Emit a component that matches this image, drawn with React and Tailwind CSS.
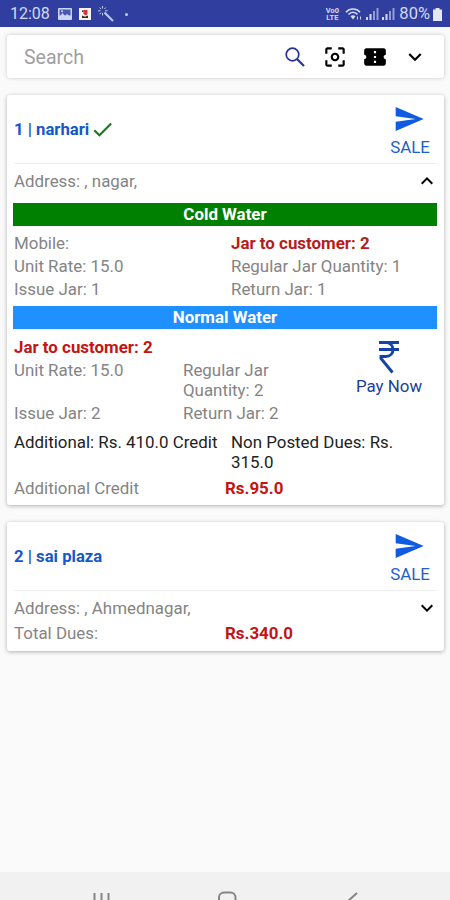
import React from "react";
import {
  MdCenterFocusWeak,
  MdCheck,
  MdConfirmationNumber,
  MdKeyboardArrowDown,
  MdKeyboardArrowUp,
  MdSend,
} from "react-icons/md";

const SignalBars = () => (
  <svg className="w-[13px] h-[14px]" viewBox="0 0 13 14" fill="currentColor">
    <rect x="0" y="10" width="2" height="3" />
    <rect x="3.5" y="7" width="2" height="6" />
    <rect x="7" y="4" width="2" height="9" opacity="0.6" />
    <rect x="10.5" y="1" width="2" height="12" opacity="0.6" />
  </svg>
);

const StatusBar = () => (
  <div className="h-[27px] pt-px bg-[#303f9f] text-[#d3d9f5] flex items-center pl-[10px] pr-2">
    <span className="w-[48px] text-[16px] leading-none">12:08</span>
    <svg className="w-[14px] h-[12px]" viewBox="0 0 14 12">
      <rect width="14" height="12" rx="1" fill="#cdd5f5" />
      <rect x="1.5" y="1.5" width="11" height="6" fill="#4a59b4" />
      <path d="M1.5 9 4.5 5 7 8 9 6l3.5 3z" fill="#cdd5f5" />
      <circle cx="4" cy="3.2" r="1" fill="#cdd5f5" />
    </svg>
    <svg className="w-[12px] h-[12px] ml-[7px]" viewBox="0 0 12 12">
      <rect width="12" height="12" fill="#f7f4ee" />
      <path d="M4.5 2h4v4L7 7.5 4.5 6z" fill="#d0343a" />
      <path d="M3 2.5h1.5V4H3zM3 7.5l3 1.3 3-1.3V10H3z" fill="#2b2b35" />
    </svg>
    <svg
      className="w-[16px] h-[16px] ml-[7px]"
      viewBox="0 0 16 16"
      stroke="#c5cdf0"
      fill="none"
    >
      <path d="M6.5 6.5 15 15" strokeWidth="2" />
      <path
        d="M4.5 0v2.5M4.5 7v2.5M0 4.8h2.5M7 4.8h2.5M1.5 1.5 3 3M7.8 1.5 6.3 3M1.5 8.2 3 6.7"
        strokeWidth="1"
      />
    </svg>
    <span className="ml-[11px] w-[3px] h-[3px] rounded-full bg-[#c5cdf0]" />
    <div className="ml-auto flex items-center">
      <div className="text-[7.5px] leading-[7px] font-bold text-center w-[14px] whitespace-pre-line">
        {"Vo0\nLTE"}
      </div>
      <svg
        className="w-[18px] h-[15px] ml-1.5"
        viewBox="0 0 18 15"
        fill="none"
        stroke="currentColor"
        strokeWidth="1.6"
      >
        <path d="M1 5.2C4.5 1 11.5 1 15 5.2" />
        <path d="M3.5 7.5c2.5-3 6.5-3 9 0" />
        <path d="M8 12.5 5.5 9.2c1.5-1.4 3.5-1.4 5 0z" fill="currentColor" stroke="none" />
        <path d="M12.5 12.5v-3M15.5 9.5v3" strokeWidth="1" />
      </svg>
      <span className="ml-[3px]">
        <SignalBars />
      </span>
      <span className="ml-[3px]">
        <SignalBars />
      </span>
      <span className="ml-1 text-[16.5px] leading-none">80%</span>
      <svg className="w-[9px] h-[13px] ml-[3px]" viewBox="0 0 9 13" fill="#e4e8fa">
        <path d="M2.5 0h4v1.5H9V13H0V1.5h2.5z" />
      </svg>
    </div>
  </div>
);

const SearchBar = () => (
  <div className="mt-2 ml-[7px] mr-[6px] h-[43px] bg-white rounded-[3px] shadow-[0_0_4px_rgba(0,0,0,0.2)] flex items-center pl-[17px] pr-4">
    <span className="flex-1 text-[19.5px] pt-[2px] text-[#a0a0a0]">Search</span>
    <svg
      className="w-[20px] h-[20px] mr-[17px]"
      viewBox="0 0 20 20"
      fill="none"
      stroke="#27339a"
    >
      <circle cx="7.5" cy="7.5" r="6.3" strokeWidth="1.7" />
      <path d="m12 12 7 7" strokeWidth="2.2" />
    </svg>
    <div className="flex items-center gap-[14px] text-[26px] text-black">
      <MdCenterFocusWeak />
      <MdConfirmationNumber />
      <MdKeyboardArrowDown />
    </div>
  </div>
);

const CardHeader = ({ title, done }) => (
  <div className="h-[69px] flex items-center justify-between border-b border-[#ededed]">
    <div className="flex items-center text-[#1558c8] font-bold text-[16.7px] pt-px">
      <span>{title}</span>
      {done && <MdCheck className="ml-px text-[25px] text-[#1b7a1b]" />}
    </div>
    <div className="w-[54px] flex flex-col items-center text-[#1a63c9]">
      <MdSend className="text-[32px] text-[#105be0] mt-[3px] mr-[3px]" />
      <span className="leading-[23px] mt-px">SALE</span>
    </div>
  </div>
);

const Banner = ({ color, children }) => (
  <div className={`h-[23px] -ml-px text-white font-bold text-center leading-[23px] ${color}`}>
    {children}
  </div>
);

const RupeeIcon = () => (
  <svg
    className="w-[22px] h-[34px]"
    viewBox="0 0 22 34"
    fill="none"
    stroke="#1544a8"
    strokeWidth="3"
  >
    <path d="M1 2.5h20M1 9.5h20" />
    <path d="M1 2.5h6.5c10 0 10 14 0 14H3v2l11.5 14" />
  </svg>
);

const cardStyle =
  "ml-[7px] mr-[6px] px-[7px] bg-white rounded-[3px] shadow-[0_1px_4px_rgba(0,0,0,0.3)]";

const App = () => {
  return (
    <div className="w-[450px] h-[900px] bg-[#fafafa] overflow-hidden flex flex-col font-['Roboto',sans-serif] text-[16.9px] leading-[20px] text-[#848484]">
      <StatusBar />
      <SearchBar />

      {/* First customer, expanded */}
      <div className={`${cardStyle} mt-[17px] h-[410px]`}>
        <CardHeader title="1 | narhari" done />
        <div className="h-[39px] flex items-center justify-between">
          <span className="-mt-[5px]">Address: , nagar,</span>
          <MdKeyboardArrowUp className="text-[24px] text-black -mt-[5px] -mr-[2px]" />
        </div>
        <Banner color="bg-[#008000]">Cold Water</Banner>
        <div className="grid grid-cols-[217px_1fr] pt-[6px] h-[80px] auto-rows-[23px] leading-[23px]">
          <span>Mobile:</span>
          <span className="font-bold text-[#b71c1c]">Jar to customer: 2</span>
          <span>Unit Rate: 15.0</span>
          <span>Regular Jar Quantity: 1</span>
          <span>Issue Jar: 1</span>
          <span>Return Jar: 1</span>
        </div>
        <Banner color="bg-[#1e90ff]">Normal Water</Banner>
        <div className="flex h-[103px] pt-[8px]">
          <div className="w-[328px]">
            <div className="font-bold text-[#c41414] h-[23px]">
              Jar to customer: 2
            </div>
            <div className="grid grid-cols-[169px_110px] gap-y-[3px]">
              <span>Unit Rate: 15.0</span>
              <span>Regular Jar Quantity: 2</span>
              <span>Issue Jar: 2</span>
              <span>Return Jar: 2</span>
            </div>
          </div>
          <div className="flex flex-col items-center w-[94px] pt-[3px] text-[#1c3f94]">
            <RupeeIcon />
            <span className="mt-[2px]">Pay Now</span>
          </div>
        </div>
        <div className="grid grid-cols-[217px_1fr] text-[#222]">
          <span className="whitespace-nowrap">Additional: Rs. 410.0 Credit</span>
          <span className="w-[180px]">Non Posted Dues: Rs. 315.0</span>
        </div>
        <div className="grid grid-cols-[211px_1fr] mt-[6px]">
          <span>Additional Credit</span>
          <span className="font-bold text-[#c41414]">Rs.95.0</span>
        </div>
      </div>

      {/* Second customer, collapsed */}
      <div className={`${cardStyle} mt-[17px] h-[129px]`}>
        <CardHeader title="2 | sai plaza" />
        <div className="h-[35px] flex items-center justify-between">
          <span className="-mt-[2px]">Address: , Ahmednagar,</span>
          <MdKeyboardArrowDown className="text-[24px] text-black -mt-[2px] -mr-[2px]" />
        </div>
        <div className="grid grid-cols-[211px_1fr] -mt-[3px]">
          <span>Total Dues:</span>
          <span className="font-bold text-[#c41414]">Rs.340.0</span>
        </div>
      </div>

      {/* Navigation bar */}
      <div className="mt-auto h-[28px] bg-[#f1f1f1] overflow-hidden">
        <svg
          className="w-[450px] h-[28px]"
          viewBox="0 0 450 28"
          fill="none"
          stroke="#858585"
          strokeWidth="2"
        >
          <path d="M94.5 21v12M101.5 21v12M108.5 21v12" />
          <rect x="219" y="20.5" width="16.5" height="16" rx="5" />
          <path d="m357 21-9 8" />
        </svg>
      </div>
    </div>
  );
};

export default App;
